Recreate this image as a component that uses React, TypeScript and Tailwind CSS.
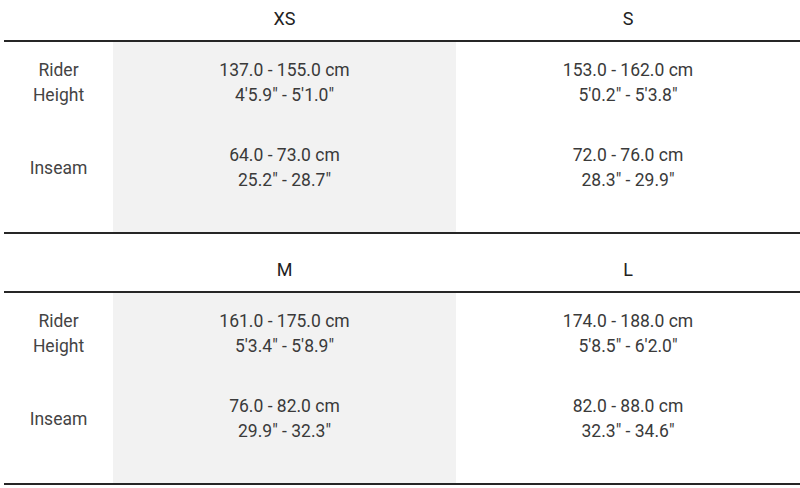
const tables = [
  {
    sizes: ["XS", "S"],
    rows: [
      { label: ["Rider", "Height"], values: [["137.0 - 155.0 cm", "4'5.9\" - 5'1.0\""], ["153.0 - 162.0 cm", "5'0.2\" - 5'3.8\""]] },
      { label: ["Inseam"], values: [["64.0 - 73.0 cm", "25.2\" - 28.7\""], ["72.0 - 76.0 cm", "28.3\" - 29.9\""]] },
    ],
  },
  {
    sizes: ["M", "L"],
    rows: [
      { label: ["Rider", "Height"], values: [["161.0 - 175.0 cm", "5'3.4\" - 5'8.9\""], ["174.0 - 188.0 cm", "5'8.5\" - 6'2.0\""]] },
      { label: ["Inseam"], values: [["76.0 - 82.0 cm", "29.9\" - 32.3\""], ["82.0 - 88.0 cm", "32.3\" - 34.6\""]] },
    ],
  },
];

function SizeTable({ sizes, rows }: (typeof tables)[number]) {
  return (
    <div className="grid grid-cols-[109px_343px_344px] border-b-2 border-[#262626]">
      <div className="border-b-2 border-[#262626]" />
      {sizes.map((s) => (
        <div key={s} className="border-b-2 border-[#262626] pt-[7px] pb-[9px] text-center text-[18px] leading-6 text-[#222]">
          {s}
        </div>
      ))}
      {rows.map((row, i) => {
        const pad = i === rows.length - 1 ? "pt-[15px] pb-[39px]" : "pt-[16px] pb-[20px]";
        return [
          <div key={"l" + i} className={pad + " flex flex-col justify-center text-center text-[17.5px] leading-[25px] text-[#444]"}>
            {row.label.map((t) => (
              <span key={t}>{t}</span>
            ))}
          </div>,
          ...row.values.map((v, j) => (
            <div
              key={"v" + i + j}
              className={(j === 0 ? "bg-[#f2f2f2] " : "") + pad + " flex flex-col text-center text-[17.5px] leading-[25px] text-[#3a3a3a]"}
            >
              <span>{v[0]}</span>
              <span>{v[1]}</span>
            </div>
          )),
        ];
      })}
    </div>
  );
}

export default function App() {
  return (
    <div className="h-[488px] w-[800px] overflow-hidden bg-white pl-[4px] font-['Roboto',sans-serif]">
      <div className="flex flex-col gap-[17px]">
        {tables.map((t) => (
          <SizeTable key={t.sizes[0]} {...t} />
        ))}
      </div>
    </div>
  );
}
